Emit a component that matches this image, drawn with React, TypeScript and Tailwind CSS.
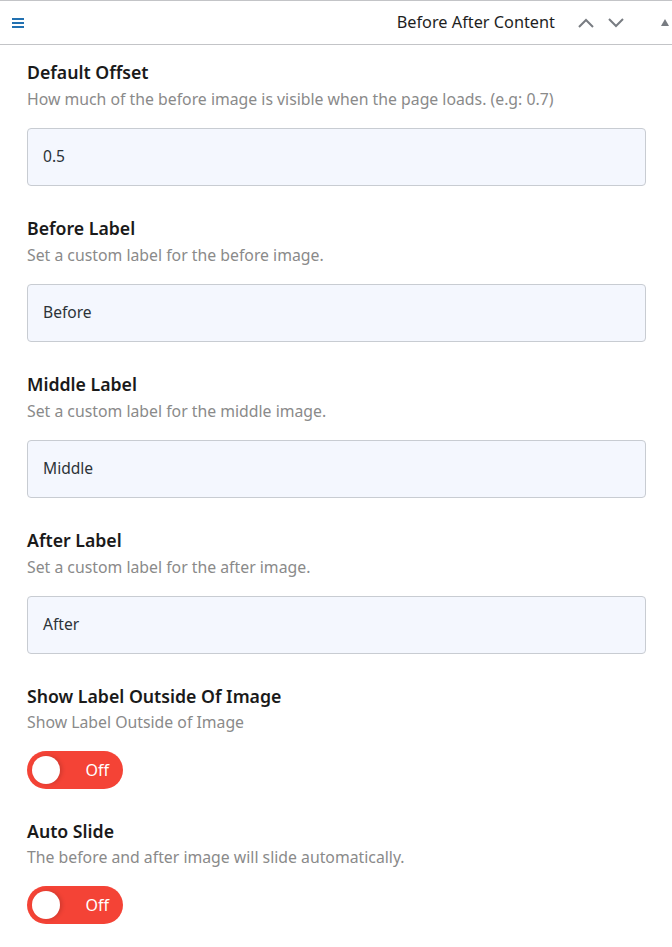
import React from "react";

const font = { fontFamily: '"Noto Sans", "Open Sans", sans-serif' };

function Field({ title, desc, value }: { title: string; desc: string; value: string }) {
  return (
    <div className="flex flex-col mb-[30px]">
      <div className="text-[17.7px] leading-[24px] font-semibold text-[#1a1a1a]">{title}</div>
      <div className="mt-[4px] text-[15.8px] leading-[22px] text-[#8a8a8a]">{desc}</div>
      <div className="mt-[18px] h-[58px] w-full rounded-[4px] border border-[#c8ccd2] bg-[#f4f7fe] flex items-center px-[15px] text-[15.6px] text-[#2c3338]">
        {value}
      </div>
    </div>
  );
}

function Toggle({ title, desc, last }: { title: string; desc: string; last?: boolean }) {
  return (
    <div className={"flex flex-col " + (last ? "" : "mb-[30px]")}>
      <div className="text-[17.7px] leading-[24px] font-semibold text-[#1a1a1a]">{title}</div>
      <div className="mt-[3px] text-[15.8px] leading-[22px] text-[#8a8a8a]">{desc}</div>
      <div className="mt-[18px] w-[96px] h-[38px] rounded-full bg-[#f44336] flex items-center pl-[5px] pr-[14px] justify-between">
        <div className="w-[28px] h-[28px] rounded-full bg-white shadow-[2px_0_4px_rgba(0,0,0,0.15)]" />
        <span className="text-white text-[16px]">Off</span>
      </div>
    </div>
  );
}

export default function App() {
  return (
    <div style={font} className="w-[672px] h-[947px] bg-white overflow-hidden">
      <div className="h-[45px] border-t border-b border-[#c3c4c7] flex items-center pl-[12px] pr-[3px]">
        <svg width="12" height="12" viewBox="0 0 12 12" className="mt-[1px]">
          <rect x="0" y="1" width="12" height="2" fill="#2271b1" />
          <rect x="0" y="5" width="12" height="2" fill="#2271b1" />
          <rect x="0" y="9" width="12" height="2" fill="#2271b1" />
        </svg>
        <div className="flex-1" />
        <span className="text-[16.3px] text-[#1e1e1e] mr-[22px]">Before After Content</span>
        <svg width="18" height="12" viewBox="0 0 18 12" className="mr-[12px]">
          <polyline points="2,10 9,3 16,10" fill="none" stroke="#787c82" strokeWidth="2" />
        </svg>
        <svg width="18" height="12" viewBox="0 0 18 12" className="mr-[36px]">
          <polyline points="2,2 9,9 16,2" fill="none" stroke="#787c82" strokeWidth="2" />
        </svg>
        <svg width="8" height="7" viewBox="0 0 8 7">
          <polygon points="4,0 8,7 0,7" fill="#787c82" />
        </svg>
      </div>
      <div className="pl-[27px] pr-[26px] pt-[15px]">
        <Field
          title="Default Offset"
          desc="How much of the before image is visible when the page loads. (e.g: 0.7)"
          value="0.5"
        />
        <Field title="Before Label" desc="Set a custom label for the before image." value="Before" />
        <Field title="Middle Label" desc="Set a custom label for the middle image." value="Middle" />
        <Field title="After Label" desc="Set a custom label for the after image." value="After" />
        <Toggle title="Show Label Outside Of Image" desc="Show Label Outside of Image" />
        <Toggle title="Auto Slide" desc="The before and after image will slide automatically." last />
      </div>
    </div>
  );
}
